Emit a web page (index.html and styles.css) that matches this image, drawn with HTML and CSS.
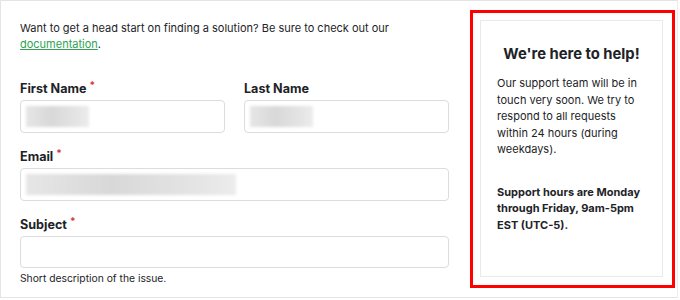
FILE: index.html
```html
<!DOCTYPE html>
<html>
<head>
<meta charset="utf-8">
<link rel="stylesheet" href="styles.css">
</head>
<body>
<div class="frame">
  <div class="main">
    <p class="intro">Want to get a head start on finding a solution? Be sure to check out our <a href="#">documentation</a>.</p>
    <div class="row">
      <div class="field">
        <label class="label">First Name <span class="req">*</span></label>
        <div class="input"><span class="blur" style="width:63px"></span></div>
      </div>
      <div class="field">
        <label class="label">Last Name</label>
        <div class="input"><span class="blur" style="width:63px"></span></div>
      </div>
    </div>
    <div class="field">
      <label class="label">Email <span class="req">*</span></label>
      <div class="input"><span class="blur" style="width:210px"></span></div>
    </div>
    <div class="field">
      <label class="label">Subject <span class="req">*</span></label>
      <div class="input short"></div>
      <div class="help">Short description of the issue.</div>
    </div>
  </div>
  <aside class="side">
    <div class="card">
      <h2 class="title">We're here to help!</h2>
      <p class="body">Our support team will be in touch very soon. We try to respond to all requests within 24 hours (during weekdays).</p>
      <p class="body strong">Support hours are Monday through Friday, 9am-5pm EST (UTC-5).</p>
    </div>
  </aside>
</div>
</body>
</html>
```
FILE: styles.css
```css
* { box-sizing: border-box; }
html, body { margin: 0; padding: 0; background: #fff; }
body { font-family: Inter, "Noto Sans", sans-serif; color: #1d2327; }
.frame {
  width: 678px;
  height: 298px;
  border: 1px solid #e4e4e4;
  border-right-color: #ececec;
  display: flex;
  overflow: hidden;
}
.main {
  width: 469px;
  padding: 19px 0 0 19px;
}
.intro {
  margin: 0 0 28px;
  font-size: 11px;
  line-height: 16px;
  width: 420px;
}
.intro a { color: #2ea455; text-decoration: underline; }
.row { display: flex; gap: 19px; width: 429px; }
.row .field { flex: 1; }
.field { width: 429px; margin-bottom: 15px; }
.row .field { width: auto; margin-bottom: 15px; }
.label {
  display: block;
  font-size: 12.6px;
  font-weight: 650;
  line-height: 17px;
  margin-bottom: 3px;
}
.req { color: #d63638; font-size: 10px; vertical-align: top; position: relative; top: -3px; }
.input {
  height: 33px;
  border: 1px solid #dcdcde;
  border-radius: 4px;
  background: #fff;
  padding: 5px 5px;
}
.input.short { height: 32px; }
.blur {
  display: block;
  height: 21px;
  background: linear-gradient(90deg, #e6e6e6, #d8d8d8 40%, #e4e4e4 80%, #ececec);
  filter: blur(1.5px);
}
.help { font-size: 10.3px; line-height: 15px; margin-top: 3px; }
.side {
  width: 205px;
  height: 278px;
  margin-top: 9px;
  border: 3px solid #ff0000;
  padding: 7px 9px 8px 7px;
}
.card {
  width: 183px;
  height: 257px;
  border: 1px solid #e8e8ef;
  padding: 22px 16px 0;
}
.title {
  margin: 0 0 10px;
  font-size: 14.8px;
  font-weight: 700;
  text-align: center;
  line-height: 22px;
}
.body {
  margin: 0 0 26px;
  font-size: 11px;
  line-height: 16.5px;
}
.strong { font-weight: 700; }
```
